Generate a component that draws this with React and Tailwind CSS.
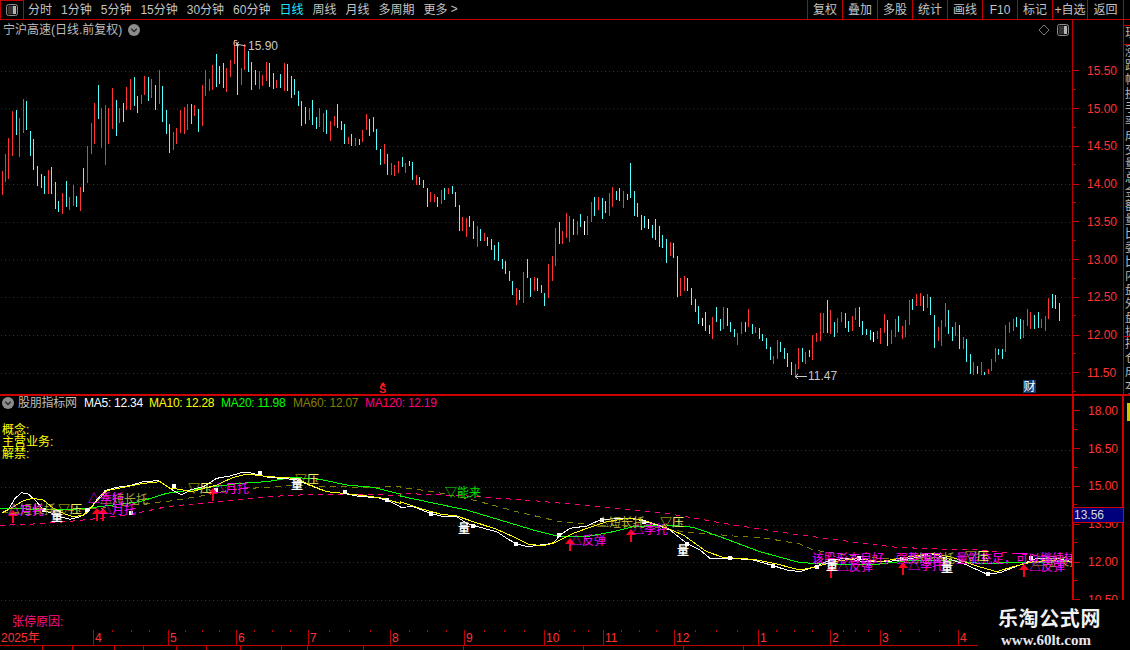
import React from 'react';

const FONT = "font-['Liberation_Sans','Noto_Sans_CJK_SC',sans-serif]";
const CJK = "'Noto Sans CJK SC', sans-serif";

const NAV = ['分时', '1分钟', '5分钟', '15分钟', '30分钟', '60分钟', '日线', '周线', '月线', '多周期', '更多'];
const TOOLS = ['复权', '叠加', '多股', '统计', '画线', 'F10', '标记', '+自选'];
const PRICE_LABELS = ['15.50', '15.00', '14.50', '14.00', '13.50', '13.00', '12.50', '12.00', '11.50'];
const PRICE_GRID = [71, 108.5, 146, 184, 222, 259.5, 297, 335, 373];
const IND_LABELS = ['18.00', '16.50', '15.00', '13.50', '12.00', '10.50'];
const IND_GRID = [450, 487, 525, 562, 600];
const MONTHS = [
  ['2025年', 'w-[93px]'], ['4', 'w-[75px]'], ['5', 'w-[68px]'], ['6', 'w-[72px]'], ['7', 'w-[82px]'],
  ['8', 'w-[74px]'], ['9', 'w-[80px]'], ['10', 'w-[59px]'], ['11', 'w-[71px]'], ['12', 'w-[84px]'],
  ['1', 'w-[72px]'], ['2', 'w-[50px]'], ['3', 'w-[78px]'], ['4', 'w-[20px]'],
];
const BOTTOM_CELLS = [
  'w-[43px]', 'w-[30px]', 'w-[42px]', 'w-[29px]', 'w-[33px]', 'w-[30px]', 'w-[34px]',
  'w-[41px]', 'w-[26px]', 'w-[56px]', 'w-[100px]', 'w-[120px]', 'w-[100px]', 'w-[60px]',
];

// bars read off the chart: x(zoomed) y1 y2 colour
const ZONE_A = `5,171,195,r 15,154,182,r 25,138,179,r 37,111,156,r 48,110,135,c 58,118,157,r 70,99,133,r 79,101,130,c
91,131,156,c 100,139,170,c 112,166,186,c 124,174,188,c 133,176,194,c 145,170,194,r 154,167,194,c 166,182,209,c
175,201,212,c 187,193,214,r 199,181,207,c 208,197,210,r 220,185,206,r 229,196,207,c 241,187,211,r 250,168,192,c
262,146,183,r 274,123,154,r 283,103,144,r 295,85,119,c 304,108,148,r 316,105,165,r 325,108,144,r 337,88,129,r
349,100,136,c 358,108,123,r 370,103,122,c 379,87,110,r 391,79,110,r 403,77,106,c 412,96,113,c 424,95,104,r
433,76,95,r 445,77,101,c 454,79,98,r 466,85,110,c 478,70,104,r 487,86,122,c 499,110,134,c 508,124,153,c
520,132,150,r 529,128,144,r 541,110,133,r 553,107,134,r 562,104,130,r 574,104,124,c 583,105,116,r 595,109,132,c`;

const ZONE_B = `5,85,126,r 16,70,96,r 28,79,91,r 37,65,90,r 49,54,87,c 58,66,84,c 70,63,88,c 79,68,92,r 91,60,77,r
103,40,64,r 112,43,95,c 124,68,85,r 133,44,70,r 145,51,72,c 154,62,90,c 166,70,85,c 178,71,89,r 187,75,86,r
199,62,81,r 208,63,87,c 220,73,89,c 229,80,88,r 241,74,88,c 253,63,91,r 262,64,91,c 274,76,98,c 283,79,95,c
295,91,106,c 304,101,126,c 316,107,124,c 328,108,120,r 337,100,125,c 349,117,129,c 358,108,127,r 370,113,132,r
379,110,134,c 391,121,141,r 403,116,126,r 412,104,128,c 424,121,130,c 433,124,144,c 445,137,144,r 454,134,146,c
466,138,146,r 478,139,145,c 487,130,142,r 499,114,130,r 508,119,136,c 520,117,132,c 529,129,150,c 541,149,165,c
553,144,164,r 562,154,175,c 574,163,175,r 583,165,176,r 595,161,173,r 607,157,167,c 616,163,173,r 628,161,166,c
637,162,180,c 649,175,185,r 658,177,185,c 670,180,188,c 682,188,207,c 691,192,202,r 703,194,202,r 712,197,207,c
724,190,204,r 733,188,200,c 745,188,194,r 757,186,194,c 766,192,207,c`;

const ZONE_C = `28,205,231,c 37,217,231,r 49,218,237,r 58,216,227,c 70,221,239,c 82,226,247,r 91,229,241,c 103,233,241,r
112,237,246,c 124,239,250,c 133,245,260,c 145,242,261,c 157,259,269,c 166,261,274,c 178,271,281,c 187,281,295,c
199,288,305,r 208,290,300,c 220,272,303,r 232,259,278,c 241,278,297,c 253,277,291,r 262,278,291,c 274,285,293,c
283,293,306,c 295,264,298,r 307,256,281,r 316,228,266,r 328,222,244,c 337,231,244,r 349,213,238,r 358,216,242,r
370,219,235,c 382,221,235,r 391,214,227,c 403,221,235,w 412,216,235,r 424,202,222,r 433,197,216,c 445,197,210,r
457,198,219,c 466,201,213,c 478,193,216,r 487,187,207,r 499,191,200,c 508,188,201,c 520,191,208,r 532,194,200,c
541,163,198,c 553,191,216,c 562,203,217,c 574,215,230,c 583,216,228,c 595,219,229,w 607,225,238,c 616,219,240,c
628,226,247,c 637,235,248,c 649,239,263,c 661,242,256,r 670,243,258,c 682,256,297,c 691,278,296,r 703,276,291,r
712,278,291,c 724,288,305,c 736,299,312,c 745,306,324,c 757,318,326,w 766,312,331,c 778,325,334,c 787,317,339,r
799,307,322,c 811,319,331,c 820,307,329,r 832,308,326,c 841,322,332,c 853,329,337,c 862,333,345,r 874,322,334,r
886,322,332,c 895,309,327,r`;

// this zone keeps the zoomed y values too (y = 280 + Y / 3)
const ZONE_D = `37,132,162,c 46,141,159,r 58,144,177,c 67,162,183,c 79,174,207,c 91,201,240,c 100,228,252,r 112,180,237,r
121,186,216,c 133,204,237,c 142,219,261,c 154,246,285,c 166,252,285,r 175,204,267,r 187,204,246,c 196,216,252,r
208,210,231,c 217,165,240,r 229,159,186,r 241,99,183,r 250,99,159,r 262,60,159,c 271,90,162,r 283,126,171,c
292,114,159,r 304,96,126,r 316,99,144,c 325,123,156,c 337,108,153,r 346,84,120,r 358,81,141,c 367,123,165,c
379,147,165,c 391,150,180,c 400,156,186,w 412,153,177,r 421,144,192,r 433,102,159,r 442,120,198,c 454,150,192,r
466,117,171,r 475,108,156,c 487,138,177,r 496,120,171,r 508,60,135,r 517,57,90,c 529,42,78,r 541,39,78,r
550,48,93,c 562,42,84,r 571,51,105,c 583,105,204,c 595,141,183,r 604,120,198,r 616,69,141,r 625,90,162,c
637,141,183,c 646,126,168,r 658,135,207,c 670,171,207,r 679,177,246,c 691,222,282,c 700,246,285,r 712,258,282,c
724,246,285,r 733,276,285,c 745,267,282,r 754,237,273,r 766,204,246,r 775,207,225,c 787,207,237,c 796,135,216,r
808,126,159,r 820,117,153,r 829,111,141,c 841,117,177,c 850,120,174,r 862,87,138,r 871,96,147,r 883,105,147,c
895,96,144,c 904,117,144,r 916,108,153,r 925,54,117,r 937,42,84,c 946,45,87,c 958,69,123,c`;

const parseBars = (raw, x0, y0, yScale) =>
  raw.trim().split(/\s+/).map((item) => {
    const [x, y1, y2, c] = item.split(',');
    return {
      x: Math.round(x0 + Number(x) / 3),
      y1: y0 + Number(y1) * yScale,
      y2: y0 + Number(y2) * yScale,
      c,
    };
  });

const BARS = [
  ...parseBars(ZONE_A, 0, 0, 1),
  ...parseBars(ZONE_B, 200, 0, 1),
  ...parseBars(ZONE_C, 450, 0, 1),
  ...parseBars(ZONE_D, 740, 280, 1 / 3),
];
const BAR_COLORS = { r: '#ff3333', c: '#55ffff', w: '#ffffff' };

// moving averages, traced in three zoomed stretches
const trace = (x0, y0, flat) => {
  const out = [];
  for (let i = 0; i < flat.length; i += 2) out.push(`${x0 + flat[i] / 3},${y0 + flat[i + 1] / 3}`);
  return out;
};
const line = (a, b, c) => [...trace(0, 370, a), ...trace(400, 470, b), ...trace(780, 490, c)].join(' ');

const MA5 = line(
  [5,430,25,420,45,385,65,368,85,372,110,395,130,420,155,430,180,440,210,448,240,440,262,428,290,390,315,362,350,352,390,347,430,335,475,332,500,348,520,362,545,375,570,360,610,350,650,325,690,318,730,306,750,308,780,316,810,323,850,325,890,330,940,350,980,365,1030,370,1080,380,1130,382,1165,392,1200,410],
  [0,112,40,110,90,130,130,140,170,140,200,160,240,172,290,185,320,205,350,222,385,230,420,225,460,220,480,195,510,175,560,168,600,150,650,145,700,145,735,155,770,165,810,180,860,220,900,240,930,265,965,267,1000,265,1060,270,1120,287,1160,300,1200,305],
  [100,232,150,210,200,205,250,215,320,215,400,205,450,190,500,205,560,225,620,252,660,248,720,225,770,205,830,205,875,215],
);
const MA10 = line(
  [5,428,40,410,70,392,100,385,130,390,160,415,190,430,220,440,250,436,280,405,320,362,370,352,430,340,480,335,510,355,540,358,575,365,610,355,650,345,700,322,740,312,790,318,850,323,890,325,930,345,980,365,1030,370,1100,378,1150,385,1200,400],
  [0,95,60,115,120,132,170,138,220,155,290,178,340,200,385,222,430,228,470,215,520,190,570,172,620,155,680,145,730,150,790,170,850,195,920,245,970,262,1060,268,1130,282,1200,300],
  [110,230,160,215,230,205,300,215,390,200,450,190,510,200,590,228,650,245,700,230,760,215,830,210,875,215],
);
const MA20 = line(
  [0,415,40,415,100,418,180,420,260,415,300,410,340,405,420,395,500,370,560,362,640,350,720,340,800,335,880,322,960,328,1040,345,1120,352,1200,372],
  [0,78,80,95,200,120,300,150,400,180,480,200,560,200,640,185,700,170,800,165,880,172,960,200,1080,245,1200,278],
  [150,222,300,222,400,210,500,210,600,220,720,218,875,215],
);
const MA60 = line(
  [5,428,150,425,300,415,440,400,520,392,620,375,700,358,800,352,880,346,1000,350,1100,352,1200,350],
  [0,52,100,65,220,90,350,125,480,155,590,165,720,165,850,185,1000,198,1100,205,1200,222],
  [100,180,200,195,300,205,400,205,500,205],
);
const MA120 = line(
  [0,466,100,462,200,455,300,445,400,432,500,410,600,400,700,390,800,380,900,375,1000,372,1100,372,1200,377],
  [0,70,200,78,400,92,600,110,800,130,1000,165,1200,195],
  [100,140,250,160,350,172,500,178,600,180,700,190,875,205],
);

const SQUARES = [
  [44, 510], [87, 510], [131, 513], [174, 486], [216, 490], [260, 473], [345, 492], [387, 500],
  [431, 514], [473, 526], [516, 544], [559, 535], [602, 520], [644, 522], [687, 544], [730, 558],
  [773, 566], [817, 567], [859, 558], [902, 559], [945, 559], [988, 574], [1031, 558],
];
const ARROWS = [
  [13, 510], [97, 508], [103, 508], [213, 488], [570, 538], [631, 529], [831, 565], [903, 562], [1024, 564],
];

const OLIVE = '#a8a840';
const MAGENTA = '#ff00ff';
// chart signals: x, centre y, colour, text
const SIGNALS = [
  [8, 509, OLIVE, '△短长托'], [8, 510, MAGENTA, '△月托'],
  [100, 499, OLIVE, '△短长托'], [88, 498, MAGENTA, '△季托'], [100, 509, MAGENTA, '△月托'],
  [213, 488, MAGENTA, '△月托'], [445, 492, '#00e000', '▽能来'], [570, 540, MAGENTA, '△反弹'],
  [597, 522, '#b8b840', '△短长托'], [632, 529, MAGENTA, '△季托'],
  [907, 558, OLIVE, '△短长托'], [1033, 561, OLIVE, '△短长托'],
  [812, 558, MAGENTA, '该股形态良好，强势明显，量能充足，可以继续持有'],
  [837, 566, MAGENTA, '△反弹'], [908, 565, MAGENTA, '△季托'], [1029, 566, MAGENTA, '△反弹'],
];
const PRESS = [[58, 509], [188, 488], [295, 479], [660, 522], [965, 556]];
const VOLUME = [[51, 516], [291, 484], [458, 528], [677, 550], [826, 565], [941, 567]];

function Badge() {
  return (
    <svg width="12" height="12" viewBox="0 0 12 12" className="shrink-0">
      <circle cx="6" cy="6" r="6" fill="#8c8c8c" />
      <path d="M3.2 4.8 L6 7.6 L8.8 4.8" fill="none" stroke="#2a2a2a" strokeWidth="1.4" />
    </svg>
  );
}

function PanelToggle() {
  return (
    <svg width="12" height="12" viewBox="0 0 12 12" className="shrink-0">
      <rect x="0.5" y="0.5" width="11" height="11" rx="2" fill="#111" stroke="#8a8a8a" />
      <rect x="7" y="2" width="3" height="8" fill="#b5b5b5" />
      <rect x="2" y="2" width="5" height="8" fill="#333" />
    </svg>
  );
}

function AxisRow({ label, tall }) {
  return (
    <div className={`relative flex items-center ${tall ? 'h-[37.8px]' : 'h-[37.75px]'}`}>
      <div className="w-[6px] h-px bg-[#c80000]" />
      <span className="ml-[8px] text-[12px] leading-none text-[#ff3333]">{label}</span>
      <div className="absolute left-0 bottom-0 w-[3px] h-px bg-[#c80000]" />
    </div>
  );
}

function SideStrip({ text }) {
  return (
    <div className="w-[14px] ml-px break-all text-[12px] leading-[14px] text-[#b8b8b8]">{text}</div>
  );
}

export default function App() {
  return (
    <div className={`relative w-[1130px] h-[650px] overflow-hidden bg-black ${FONT}`}>
      {/* top toolbar */}
      <header className="flex h-[20px] border-b border-[#c00000] text-[12px] text-[#c4c4c4]">
        <div className="flex w-[24px] items-center justify-center border-r border-l border-t border-[#c00000]">
          <PanelToggle />
        </div>
        <nav className="ml-[4px] flex items-center gap-[9px]">
          {NAV.map((item) => (
            <span key={item} className={item === '日线' ? 'text-[#22e6ff]' : ''}>{item}</span>
          ))}
          <span className="-ml-[6px] font-['Liberation_Mono',monospace] text-[12px]">&gt;</span>
        </nav>
        <div className="ml-auto flex">
          {TOOLS.map((item) => (
            <span key={item} className="flex w-[35px] items-center justify-center border-l border-[#c00000]">{item}</span>
          ))}
          <span className="flex w-[37px] items-center justify-center border-x border-[#c00000]">返回</span>
          <div className="w-[6px]" />
        </div>
      </header>

      {/* price panel */}
      <section className="flex h-[374px]">
        <div className="relative w-[1072px] overflow-hidden">
          <svg width="1072" height="374" viewBox="0 20 1072 374" className="absolute inset-0 block">
            {PRICE_GRID.map((y) => (
              <line key={y} x1="1" x2="1072" y1={y + 0.5} y2={y + 0.5} stroke="#a00000" strokeDasharray="1 3" />
            ))}
            {BARS.map((b, i) => (
              <rect key={i} x={b.x} y={b.y1} width="1" height={b.y2 - b.y1} fill={BAR_COLORS[b.c]} shapeRendering="crispEdges" />
            ))}
            <path d="M236 44 L246 46 M236 44 L239 42 M236 44 L239 46" fill="none" stroke="#c8c8c8" />
            <path d="M795 376.5 L807 376.5 M795 376.5 L798 374 M795 376.5 L798 379" fill="none" stroke="#c8c8c8" />
            <path d="M383 382 L385.5 385 L380.5 385 Z" fill="#ff1a1a" />
            <text x="233" y="46" fontSize="9" fill="#c8c8c8">6</text>
            <text x="248" y="50" fontSize="12" fill="#c8c8c8">15.90</text>
            <text x="808" y="380" fontSize="12" fill="#c8c8c8">11.47</text>
            <text x="379" y="393" fontSize="11" fontWeight="700" fill="#ff1a1a">S</text>
            <rect x="1023" y="380" width="13" height="13" fill="#123c72" />
            <text x="1023.5" y="391" fontSize="12" fill="#ffffff">财</text>
          </svg>

          <div className="relative flex h-[20px] items-center pl-[3px] pr-[3px] text-[12px] text-[#bdbdbd]">
            <span>宁沪高速(日线.前复权)</span>
            <div className="ml-[6px]"><Badge /></div>
            <svg width="12" height="12" viewBox="0 0 12 12" className="ml-auto mr-[7px]">
              <path d="M6 1 L11 6 L6 11 L1 6 Z" fill="none" stroke="#7a7a7a" />
            </svg>
            <PanelToggle />
          </div>
        </div>
        <div className="w-[52px] border-x border-[#c00000] pt-[32px]">
          {PRICE_LABELS.map((p) => <AxisRow key={p} label={p} />)}
        </div>
        <div className="w-[6px] overflow-hidden">
          <div className="mt-[5px] h-[20px] overflow-hidden border-y border-[#c00000]">
            <SideStrip text="现" />
          </div>
          <div className="h-[291px] overflow-hidden">
            <SideStrip text="涨跌幅换手率成交量总金额量比委比内盘外盘振幅市盈率流通股本总股本净资产每股收益" />
          </div>
          <div className="h-[58px] overflow-hidden border-t border-[#c00000]">
            <SideStrip text="持仓成本分布" />
          </div>
        </div>
      </section>

      {/* indicator panel */}
      <section className="flex h-[236px] border-t-2 border-[#d00000]">
        <div className="relative flex w-[1072px] flex-col overflow-hidden">
          <svg width="1072" height="234" viewBox="0 396 1072 234" className="absolute inset-0 block">
            {IND_GRID.map((y) => (
              <line key={y} x1="1" x2="1072" y1={y + 0.5} y2={y + 0.5} stroke="#a00000" strokeDasharray="1 3" />
            ))}
            <polyline points={MA120} fill="none" stroke="#ff0080" strokeDasharray="5 5" shapeRendering="crispEdges" />
            <polyline points={MA60} fill="none" stroke="#808000" strokeDasharray="6 5" shapeRendering="crispEdges" />
            <polyline points={MA20} fill="none" stroke="#00ff00" shapeRendering="crispEdges" />
            <polyline points={MA5} fill="none" stroke="#ffffff" shapeRendering="crispEdges" />
            <polyline points={MA10} fill="none" stroke="#ffff00" shapeRendering="crispEdges" />
            {SQUARES.map(([x, y]) => (
              <rect key={x} x={x - 2} y={y - 2} width="4" height="4" fill="#ffffff" shapeRendering="crispEdges" />
            ))}
            {ARROWS.map(([x, y]) => (
              <path key={x} d={`M${x} ${y} L${x + 5} ${y + 6} L${x + 1} ${y + 6} L${x + 1} ${y + 13} L${x - 1} ${y + 13} L${x - 1} ${y + 6} L${x - 5} ${y + 6} Z`} fill="#ff0020" />
            ))}
            {SIGNALS.map(([x, y, color, text]) => (
              <text key={`${x}-${y}`} x={x} y={y + 4.5} fontSize="12" fontFamily={CJK} fill={color}>{text}</text>
            ))}
            {PRESS.map(([x, y]) => (
              <text key={x} x={x} y={y + 4.5} fontSize="12" fontFamily={CJK}>
                <tspan fill="#c8c800" fontWeight="700">▽</tspan>
                <tspan fill="#f4f460">压</tspan>
              </text>
            ))}
            {VOLUME.map(([x, y]) => (
              <text key={x} x={x} y={y + 4.5} fontSize="12" fontWeight="700" fontFamily={CJK} fill="#ffffff">量</text>
            ))}
          </svg>

          <div className="relative flex h-[14px] items-center pl-[2px] text-[12px] leading-none tracking-[-0.25px]">
            <Badge />
            <span className="ml-[4px] w-[66px] text-[#bdbdbd]">股朋指标网</span>
            <span className="w-[65px] text-white">MA5: 12.34</span>
            <span className="w-[72px] text-[#ffff00]">MA10: 12.28</span>
            <span className="w-[72px] text-[#00ff00]">MA20: 11.98</span>
            <span className="w-[72px] text-[#808000]">MA60: 12.07</span>
            <span className="text-[#ff0080]">MA120: 12.19</span>
          </div>

          <div className="relative mt-[14px] pl-[2px] text-[12px] leading-[12px] text-[#ffff00]">
            <p>概念:</p>
            <p>主营业务:</p>
            <p>解禁:</p>
          </div>
          <p className="relative mt-auto pb-px pl-[12px] text-[12px] leading-[13px] text-[#ff1080]">张停原因:</p>
        </div>

        <div className="relative w-[52px] border-x-2 border-[#d00000]">
          <div className="-mt-[4px]">
            {IND_LABELS.map((p) => <AxisRow key={p} label={p} tall />)}
          </div>
          <div className="absolute -left-[1px] top-[111px] flex h-[16px] w-[50px] items-center border-y border-[#d00000] bg-[#00007c] pl-px text-[12px] leading-none text-[#d8d8d8]">
            13.56
          </div>
        </div>

        <div className="w-[6px] overflow-hidden">
          <div className="mt-[7px] ml-[3px] h-[18px] bg-[#c8c800]" />
        </div>
      </section>

      {/* time axis */}
      <div className="flex h-[16px] w-[978px] border-b border-[#c00000] text-[12px] leading-[17px] text-[#ff3333]">
        {MONTHS.map(([label, width], i) => (
          <div key={i} className={`relative shrink-0 border-l border-[#c00000] pl-px first:border-l-0 ${width}`}>
            {label}
            <div className="absolute inset-x-0 top-0 flex justify-evenly">
              {i > 0 && i < 13 && [0, 1, 2].map((t) => <span key={t} className="h-[2px] w-px bg-[#c00000]" />)}
            </div>
          </div>
        ))}
      </div>
      <div className="flex h-[4px] w-[978px]">
        {BOTTOM_CELLS.map((width, i) => (
          <div key={i} className={`shrink-0 border-r border-[#c00000] ${width}`} />
        ))}
      </div>

      {/* site watermark pasted over the corner */}
      <div className="absolute bottom-0 right-0 flex h-[50px] w-[152px] flex-col bg-black pl-[20px] pt-[8px]">
        <span className="text-[20px] font-bold leading-[22px] tracking-[0.6px] text-[#f2f2f2]">乐淘公式网</span>
        <span className="ml-[3px] mt-[3px] font-['Liberation_Serif',serif] text-[15px] font-bold leading-[14px] text-[#e6e6f0]">www.60lt.com</span>
      </div>
    </div>
  );
}
